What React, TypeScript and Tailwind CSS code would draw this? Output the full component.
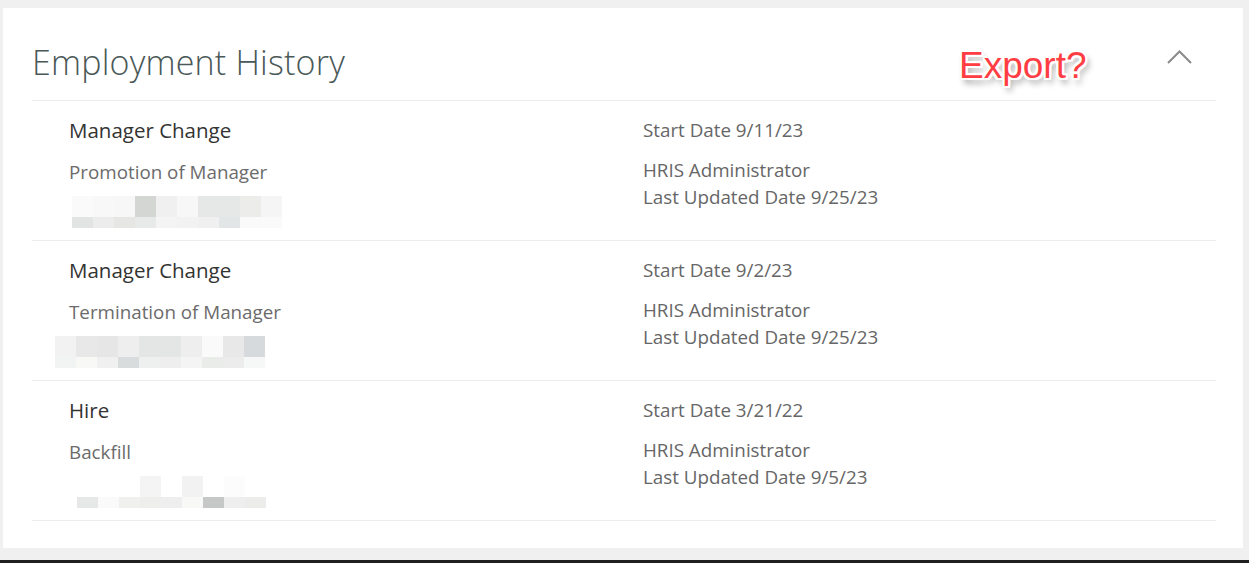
const rows = [
  {
    title: "Manager Change",
    reason: "Promotion of Manager",
    start: "Start Date 9/11/23",
    by: "HRIS Administrator",
    updated: "Last Updated Date 9/25/23",
    blurX: "ml-[3px]",
    blur: [
      ["#fafafa", "#f8f8f8", "#f7f7f7", "#d4d6d4", "#f0f0f0", "#f6f7f6", "#e6e8e8", "#e6e8e8", "#ecedea", "#f5f5f5"],
      ["#e2e4e4", "#ececec", "#e6e6e4", "#e8eaea", "#f4f4f4", "#f2f2f2", "#f0f0f0", "#e2e6e6", "#fafafa", "#fafafa"],
    ],
  },
  {
    title: "Manager Change",
    reason: "Termination of Manager",
    start: "Start Date 9/2/23",
    by: "HRIS Administrator",
    updated: "Last Updated Date 9/25/23",
    blurX: "-ml-[14px]",
    blur: [
      ["#f2f2f2", "#e8e8e8", "#e6e6e6", "#eeeeee", "#e4e6e6", "#e4e6e6", "#eeeeee", "#fafafa", "#e8e8e8", "#d6dadc"],
      ["#f2f4f4", "#f8f8f6", "#f0f0f0", "#d8dcdc", "#eef0f0", "#eeeeee", "#f4f4f4", "#eaecea", "#ececec", "#f6f8f8"],
    ],
  },
  {
    title: "Hire",
    reason: "Backfill",
    start: "Start Date 3/21/22",
    by: "HRIS Administrator",
    updated: "Last Updated Date 9/5/23",
    blurX: "ml-[8px]",
    blur: [
      ["#ffffff", "#ffffff", "#ffffff", "#f4f4f4", "#ffffff", "#f2f2f2", "#ffffff", "#fcfcfc", "#ffffff"],
      ["#e6e8e8", "#fafafa", "#f0f0ee", "#eeeeec", "#eeeeee", "#f8f8f6", "#c6c8c8", "#eeeeee", "#ececea"],
    ],
  },
];

function Blur({ cells, className }: { cells: string[][]; className: string }) {
  return (
    <div className={`mt-[10px] flex flex-col ${className}`}>
      {cells.map((line, i) => (
        <div key={i} className={`flex ${i === 0 ? "h-[21px]" : "h-[11px]"}`}>
          {line.map((c, j) => (
            <div key={j} className="w-[21px]" style={{ backgroundColor: c }} />
          ))}
        </div>
      ))}
    </div>
  );
}

export default function App() {
  return (
    <div className="w-[1249px] h-[563px] bg-[#f0f0f0] flex flex-col overflow-hidden" style={{ fontFamily: '"Open Sans", "Noto Sans", sans-serif' }}>
      <div className="mt-[8px] ml-[3px] w-[1240px] h-[540px] bg-white pl-[29px] pr-[27px] relative">
        {/* Header */}
        <div className="h-[93px] border-b border-[#ececec] flex items-center relative">
          <h1 className="text-[34px] leading-none font-light text-[#4a5857] tracking-[0.2px] mt-[16px]">Employment History</h1>
          <div
            className="absolute left-[927px] top-[39px] text-[37px] leading-none text-[#ff3d43] font-medium"
            style={{
              fontFamily: '"Liberation Sans", Arial, sans-serif',
              textShadow:
                "2px 0 0 #fff, -2px 0 0 #fff, 0 2px 0 #fff, 0 -2px 0 #fff, 2px 2px 0 #fff, -2px -2px 0 #fff, 2px -2px 0 #fff, -2px 2px 0 #fff, 3px 5px 6px rgba(0,0,0,0.45)",
            }}
          >
            Export?
          </div>
          <svg className="absolute left-[1133px] top-[40px]" width="28" height="18" viewBox="0 0 28 18" fill="none">
            <polyline points="3,15 14.5,3.5 26,15" stroke="#8a8a8a" strokeWidth="2" />
          </svg>
        </div>

        {/* Rows */}
        {rows.map((r, i) => (
          <div key={i} className="h-[140px] border-b border-[#ececec] grid grid-cols-[611px_1fr] pt-[15px]">
            <div className="pl-[37px] flex flex-col">
              <div className="text-[20.5px] leading-[28px] text-[#333]">{r.title}</div>
              <div className="mt-[15px] text-[18.8px] leading-[27px] text-[#6b6b6b]">{r.reason}</div>
              <Blur cells={r.blur} className={r.blurX} />
            </div>
            <div className="flex flex-col text-[18.8px] text-[#666]">
              <div className="leading-[28px]">{r.start}</div>
              <div className="mt-[13px] leading-[27px]">{r.by}</div>
              <div className="leading-[27px]">{r.updated}</div>
            </div>
          </div>
        ))}
      </div>
      <div className="mt-[12px] h-[3px] bg-[#202020]" />
    </div>
  );
}
